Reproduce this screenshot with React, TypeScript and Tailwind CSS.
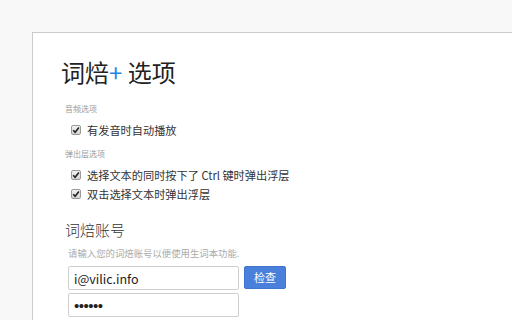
import { useState } from 'react';

function Check({ checked }: { checked: boolean }) {
    return (
        <span className="w-[10px] h-[10px] shrink-0 rounded-[2px] border border-[#9a9a9a] bg-gradient-to-b from-[#f2f2f2] to-[#d4d4d4] flex items-center justify-center">
            {checked && (
                <svg width="8" height="8" viewBox="0 0 8 8">
                    <path d="M1.2 4.2 L3.1 6.2 L6.9 1.4" fill="none" stroke="#222" strokeWidth="1.6" />
                </svg>
            )}
        </span>
    );
}

function Option({ label, top }: { label: string; top: string }) {
    const [on, setOn] = useState(true);
    return (
        <label onClick={() => setOn(!on)} className={`flex items-center gap-[6px] pl-[6px] h-[18px] text-[11.2px] text-[#333] ${top}`}>
            <Check checked={on} />
            <span>{label}</span>
        </label>
    );
}

export default function App() {
    return (
        <div
            className="w-[512px] h-[320px] overflow-hidden bg-[#f8f8f8] pt-[32px] pl-[32px]"
            style={{ fontFamily: '"Noto Sans CJK SC", "Liberation Sans", sans-serif' }}
        >
            <div className="h-[288px] bg-white border-l border-t border-[#cbcbcb] pl-[28px]">
                {/* Title */}
                <h1 className="mt-[23px] h-[32px] leading-[32px] text-[24px] text-[#222] font-normal">
                    词焙<span className="text-[#1f86e6]">+</span> 选项
                </h1>

                <div className="pl-[4px]">
                    {/* Audio */}
                    <div className="mt-[15px] h-[12px] leading-[12px] text-[8px] text-[#9a9a9a]">音频选项</div>
                    <Option label="有发音时自动播放" top="mt-[6px]" />

                    {/* Popup */}
                    <div className="mt-[9px] h-[12px] leading-[12px] text-[8px] text-[#9a9a9a]">弹出层选项</div>
                    <Option label="选择文本的同时按下了 Ctrl 键时弹出浮层" top="mt-[6px]" />
                    <Option label="双击选择文本时弹出浮层" top="mt-[1px]" />

                    {/* Account */}
                    <h2 className="mt-[16px] h-[22px] leading-[22px] text-[15px] text-[#333] font-light">词焙账号</h2>
                    <div className="pl-[3px]">
                        <p className="mt-[5px] h-[14px] leading-[14px] text-[9.4px] text-[#aaa]">请输入您的词焙账号以便使用生词本功能.</p>
                        <div className="mt-[6px] flex items-start gap-[5px]">
                            <input
                                defaultValue="i@vilic.info"
                                className="w-[171px] h-[24px] border border-[#cfcfcf] rounded-[2px] px-[5px] text-[12.5px] text-[#222] outline-none"
                            />
                            <button className="w-[42px] h-[23px] rounded-[2px] bg-[#4a80dc] border border-[#3f74cf] text-white text-[11px]">
                                检查
                            </button>
                        </div>
                        <div className="mt-[3px] w-[171px] h-[24px] border border-[#cfcfcf] rounded-[2px] px-[5px] flex items-center font-['Liberation_Sans'] text-[15px] tracking-[-0.5px] text-[#222] leading-none">
                            ••••••
                        </div>
                    </div>
                </div>
            </div>
        </div>
    );
}
